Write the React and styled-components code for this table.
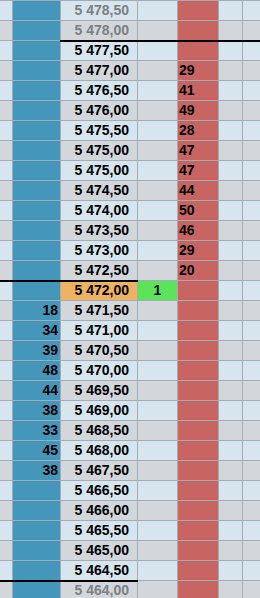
import React from "react";
import { styled, createGlobalStyle } from "styled-components";

const GlobalStyle = createGlobalStyle`
  html, body {
    margin: 0;
    padding: 0;
    background: #d6e5ee;
  }
`;

const rows = [
  { price: "5 478,50", faded: true },
  { price: "5 478,00", faded: true },
  { price: "5 477,50", cut: "right" },
  { price: "5 477,00", ask: 29 },
  { price: "5 476,50", ask: 41 },
  { price: "5 476,00", ask: 49 },
  { price: "5 475,50", ask: 28 },
  { price: "5 475,00", ask: 47 },
  { price: "5 475,00", ask: 47 },
  { price: "5 474,50", ask: 44 },
  { price: "5 474,00", ask: 50 },
  { price: "5 473,50", ask: 46 },
  { price: "5 473,00", ask: 29 },
  { price: "5 472,50", ask: 20 },
  { price: "5 472,00", last: true, trade: 1, cut: "left" },
  { price: "5 471,50", bid: 18 },
  { price: "5 471,00", bid: 34 },
  { price: "5 470,50", bid: 39 },
  { price: "5 470,00", bid: 48 },
  { price: "5 469,50", bid: 44 },
  { price: "5 469,00", bid: 38 },
  { price: "5 468,50", bid: 33 },
  { price: "5 468,00", bid: 45 },
  { price: "5 467,50", bid: 38 },
  { price: "5 466,50" },
  { price: "5 466,00" },
  { price: "5 465,50" },
  { price: "5 465,00" },
  { price: "5 464,50" },
  { price: "5 464,00", faded: true, cut: "left" },
];

export default function App() {
  return (
    <>
      <GlobalStyle />
      <Ladder>
        {rows.map((row, i) => (
          <Row key={i}>
            <Side $alt={i % 2 === 1} $cut={row.cut === "left"} />
            <Bid $cut={row.cut === "left"}>{row.bid}</Bid>
            <Price
              $alt={i % 2 === 1}
              $last={row.last}
              $faded={row.faded}
              $cut={row.cut}
            >
              {row.price}
            </Price>
            <Trade $alt={i % 2 === 1} $hit={row.trade} $cut={row.cut === "right"}>
              {row.trade}
            </Trade>
            <Ask $cut={row.cut === "right"}>{row.ask}</Ask>
            <Side $alt={i % 2 === 1} $cut={row.cut === "right"} />
            <Side $alt={i % 2 === 1} $cut={row.cut === "right"} />
          </Row>
        ))}
      </Ladder>
    </>
  );
}

const Ladder = styled.div`
  width: 260px;
  display: flex;
  flex-direction: column;
  background: #a1adb5;
  font-family: "Liberation Sans", Arial, sans-serif;
  font-size: 14px;
  font-weight: 700;
  overflow: hidden;
`;

const Row = styled.div`
  display: grid;
  grid-template-columns: 12px 47px 76px 39px 40px 23px 1fr;
  column-gap: 1px;
  height: 19px;
  padding-top: 1px;
`;

const Cell = styled.div`
  position: relative;
  line-height: 19px;
  white-space: nowrap;
  color: #000;

  &::before {
    content: "";
    display: ${(p) => (p.$cut ? "block" : "none")};
    position: absolute;
    top: -1px;
    left: -1px;
    right: -1px;
    height: 2px;
    background: #000;
  }
`;

const Side = styled(Cell)`
  background: ${(p) => (p.$alt ? "#d3d7dc" : "#d6e5ee")};
`;

const Bid = styled(Cell)`
  background: #4596bb;
  text-align: right;
  padding-right: 2px;
`;

const Price = styled(Cell)`
  background: ${(p) =>
    p.$last ? "#efb262" : p.$alt ? "#d3d7dc" : "#d6e5ee"};
  color: ${(p) => (p.$faded ? "#7d7f82" : "#000")};
  text-align: right;
  padding-right: 8px;

  &::before {
    display: ${(p) => (p.$cut ? "block" : "none")};
  }
`;

const Trade = styled(Cell)`
  background: ${(p) =>
    p.$hit ? "#5ce35a" : p.$alt ? "#d3d7dc" : "#d6e5ee"};
  text-align: center;
`;

const Ask = styled(Cell)`
  background: #c86462;
  padding-left: 1px;
`;
